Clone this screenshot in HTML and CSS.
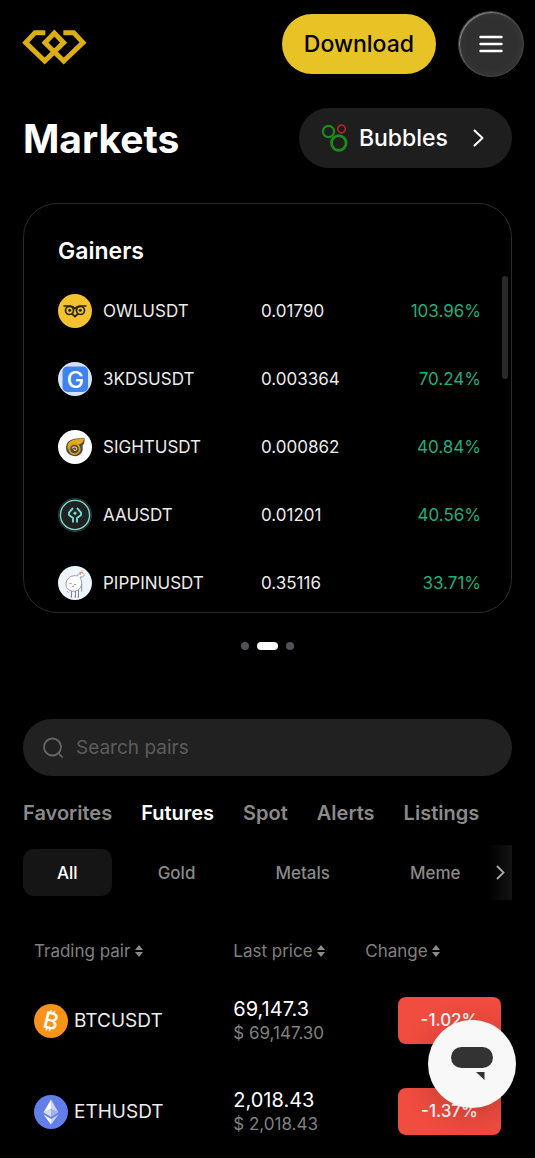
FILE: index.html
```html
<!DOCTYPE html>
<html lang="en">
<head>
  <meta charset="UTF-8">
  <meta name="viewport" content="width=device-width, initial-scale=1.0">
  <title>Markets</title>
  <link rel="stylesheet" href="styles.css">
</head>
<body>

  <!-- Top bar -->
  <header class="topbar">
    <a class="logo" href="#" aria-label="Home">
      <svg width="65" height="36" viewBox="66 86 195 108" fill="none" stroke="#dcae15" stroke-width="15">
        <path d="M136 97H105L77 127L134 182L191 127L163 98L135 127L191 182L249 127L221 97H190"/>
      </svg>
    </a>
    <a class="download" href="#">Download</a>
    <button class="menu" type="button" aria-label="Menu">
      <svg width="24" height="18" viewBox="0 0 24 18" stroke="#fff" stroke-width="2.4" stroke-linecap="round">
        <path d="M1.5 2H22.5M1.5 9H22.5M1.5 16H22.5"/>
      </svg>
    </button>
  </header>

  <main>
    <div class="title-row">
      <h1>Markets</h1>
      <a class="bubbles" href="#">
        <svg width="28" height="28" viewBox="0 0 28 28" fill="none">
          <circle cx="7.5" cy="7.5" r="5.6" stroke="#1d8a1d" stroke-width="2.2"/>
          <circle cx="20.5" cy="5" r="3.8" stroke="#a52a24" stroke-width="1.7"/>
          <circle cx="17.8" cy="19" r="7.3" stroke="#1d8a1d" stroke-width="2.8"/>
        </svg>
        <span>Bubbles</span>
        <svg class="chevron" width="11" height="18" viewBox="0 0 11 18" fill="none" stroke="#fff" stroke-width="2" stroke-linecap="round" stroke-linejoin="round">
          <path d="M1.5 1.5L9.5 9L1.5 16.5"/>
        </svg>
      </a>
    </div>

    <!-- Gainers card -->
    <section class="card">
      <h2>Gainers</h2>
      <ul class="coins">
        <li>
          <span class="coin">
            <svg width="34" height="34" viewBox="0 0 34 34" fill="none">
              <circle cx="17" cy="17" r="17" fill="#f2c230"/>
              <g stroke="#292410" stroke-width="1.7">
                <path d="M5.5 12H12.5C15 12 16 13.3 17 14.6C18 13.3 19 12 21.5 12H28.5"/>
                <circle cx="11.5" cy="16.5" r="4"/>
                <circle cx="22.5" cy="16.5" r="4"/>
                <path d="M14.2 20L17 22.5L19.8 20"/>
              </g>
              <circle cx="11.7" cy="16.3" r="1.5" fill="#292410"/>
              <circle cx="22.3" cy="16.3" r="1.5" fill="#292410"/>
            </svg>
            OWLUSDT
          </span>
          <span>0.01790</span>
          <span class="up">103.96%</span>
        </li>
        <li>
          <span class="coin">
            <svg width="34" height="34" viewBox="0 0 34 34">
              <circle cx="17" cy="17" r="17" fill="#d5e2fa"/>
              <rect x="4.5" y="4.5" width="25.5" height="25.5" rx="5" fill="#3f83f3"/>
              <text class="letter" x="17.3" y="25.5" text-anchor="middle" fill="#fff">G</text>
            </svg>
            3KDSUSDT
          </span>
          <span>0.003364</span>
          <span class="up">70.24%</span>
        </li>
        <li>
          <span class="coin">
            <svg width="34" height="34" viewBox="0 0 34 34" fill="none">
              <circle cx="17" cy="17" r="17" fill="#fff"/>
              <path d="M26.5 7.5C24 9 15 7 10 12C6 17 8 25 15.5 26C22 27 26 22 24.5 15.5C27 13.5 26.5 10 26.5 7.5Z" fill="#4d4a45"/>
              <path d="M26 8.2C22 9.5 15 8 11 12.5C9 15 9 18 10 20C11 14 17 13 20 14.5C23 14.5 26 12 26 8.2Z" fill="#e5ab1e"/>
              <circle cx="16.5" cy="19" r="5.2" stroke="#d69d20" stroke-width="1.8"/>
              <path d="M14 18.5C15 16 20 17 18.5 19.5C17.5 21 15.5 20.5 16 19" stroke="#edbd3d" stroke-width="1.3"/>
            </svg>
            SIGHTUSDT
          </span>
          <span>0.000862</span>
          <span class="up">40.84%</span>
        </li>
        <li>
          <span class="coin">
            <svg width="34" height="34" viewBox="0 0 34 34" fill="none" stroke="#78d9cf">
              <circle cx="17" cy="17" r="16.5" fill="#202221" stroke="#363b3a" stroke-width="1"/>
              <circle cx="17" cy="17" r="14.6" stroke-width="1.4"/>
              <path d="M15 10L11 14.5V17L15 20V24.5M19 10L23 14.5V17L19 20V24.5" stroke-width="1.9"/>
              <path d="M17 13.3L19 15.3L17 17.3L15 15.3Z" fill="#78d9cf" stroke="none"/>
            </svg>
            AAUSDT
          </span>
          <span>0.01201</span>
          <span class="up">40.56%</span>
        </li>
        <li>
          <span class="coin">
            <svg width="34" height="34" viewBox="0 0 34 34" fill="none">
              <circle cx="17" cy="17" r="17" fill="#eff5fd"/>
              <g stroke="#85868c" stroke-width=".8">
                <path d="M13.5 24.5V31M17.5 25V31M20.5 24V31M23.7 18V25.5M12.5 31H14M16.5 31H18M19.5 31H21" stroke="#686a74"/>
                <path d="M22 11C24 15 25 21 20 24C15 27 8 24.5 8 18.5C8 12 14 8.5 19.5 10C20 7.5 22 6 24.5 7C27.5 8.5 26 11.5 23 11Z" fill="#fdfdfd"/>
                <path d="M11.5 17.5H13.5M16 18.5H18M14 20Q15 21 16 20"/>
              </g>
              <path d="M24 3L23.3 7H24.8Z" fill="#dda13a"/>
              <path d="M22.5 6L22 9M9 25L10.5 27" stroke="#ee7780"/>
            </svg>
            PIPPINUSDT
          </span>
          <span>0.35116</span>
          <span class="up">33.71%</span>
        </li>
      </ul>
      <span class="scroll-thumb"></span>
    </section>

    <div class="dots">
      <button type="button" aria-label="Slide 1"></button>
      <button class="active" type="button" aria-label="Slide 2"></button>
      <button type="button" aria-label="Slide 3"></button>
    </div>

    <label class="search">
      <svg width="22" height="22" viewBox="0 0 22 22" fill="none" stroke="#666" stroke-width="1.8" stroke-linecap="round">
        <circle cx="9.5" cy="10" r="8.5"/>
        <path d="M15.5 16L19 20"/>
      </svg>
      <input type="text" placeholder="Search pairs" aria-label="Search pairs">
    </label>

    <nav class="tabs">
      <a href="#">Favorites</a>
      <a class="active" href="#">Futures</a>
      <a href="#">Spot</a>
      <a href="#">Alerts</a>
      <a href="#">Listings</a>
    </nav>

    <div class="filters">
      <div class="chips">
        <button class="active" type="button">All</button>
        <button type="button">Gold</button>
        <button type="button">Metals</button>
        <button type="button">Meme</button>
      </div>
      <button class="more" type="button" aria-label="More categories">
        <svg width="9" height="15" viewBox="0 0 9 15" fill="none" stroke="#aaa" stroke-width="1.8">
          <path d="M1 1L7.5 7.5L1 14"/>
        </svg>
      </button>
    </div>

    <!-- Pairs -->
    <table class="pairs">
      <thead>
        <tr>
          <th>Trading pair <svg class="sort" width="8" height="12" viewBox="0 0 8 12" fill="#8c8c8c"><path d="M4 0L8 5H0ZM0 7H8L4 12Z"/></svg></th>
          <th>Last price <svg class="sort" width="8" height="12" viewBox="0 0 8 12" fill="#8c8c8c"><path d="M4 0L8 5H0ZM0 7H8L4 12Z"/></svg></th>
          <th>Change <svg class="sort" width="8" height="12" viewBox="0 0 8 12" fill="#8c8c8c"><path d="M4 0L8 5H0ZM0 7H8L4 12Z"/></svg></th>
        </tr>
      </thead>
      <tbody>
        <tr>
          <td>
            <div class="pair">
              <svg width="34" height="34" viewBox="0 0 34 34">
                <circle cx="17" cy="17" r="17" fill="#f7931a"/>
                <text class="letter" x="17" y="25" text-anchor="middle" fill="#fff" transform="rotate(14 17 17)">₿</text>
              </svg>
              BTCUSDT
            </div>
          </td>
          <td><div class="price">69,147.3</div><div class="usd">$ 69,147.30</div></td>
          <td><div class="change">-1.02%</div></td>
        </tr>
        <tr>
          <td>
            <div class="pair">
              <svg width="34" height="34" viewBox="0 0 34 34">
                <circle cx="17" cy="17" r="17" fill="#627eea"/>
                <path d="M17 4.5L9.5 17.5L17 14Z" fill="#fff"/>
                <path d="M17 4.5L24.5 17.5L17 14Z" fill="#cdd6f8"/>
                <path d="M9.5 17.5L17 14V22Z" fill="#d5dcf9"/>
                <path d="M24.5 17.5L17 14V22Z" fill="#a3b3f2"/>
                <path d="M9.5 19.5L17 24V29.5Z" fill="#fff"/>
                <path d="M24.5 19.5L17 24V29.5Z" fill="#cdd6f8"/>
              </svg>
              ETHUSDT
            </div>
          </td>
          <td><div class="price">2,018.43</div><div class="usd">$ 2,018.43</div></td>
          <td><div class="change">-1.37%</div></td>
        </tr>
      </tbody>
    </table>
  </main>

  <!-- Floating chat button -->
  <button class="chat" type="button" aria-label="Chat">
    <svg width="42" height="34" viewBox="0 0 42 34" fill="#333">
      <rect width="42" height="21" rx="10.5"/>
      <path d="M25 25H33.5V33Z"/>
    </svg>
  </button>

</body>
</html>
```
FILE: styles.css
```css
* {
  box-sizing: border-box;
}

body {
  margin: 0;
  background-color: #000;
  color: #fff;
  font-family: Inter, "Open Sans", sans-serif;
  font-size: 17px;
}

a {
  color: inherit;
  text-decoration: none;
}

button {
  border: 0;
  padding: 0;
  font: inherit;
  color: inherit;
  background: none;
}

svg {
  display: block;
  flex-shrink: 0;
}

/* Top bar */
.topbar {
  display: flex;
  align-items: center;
  gap: 22px;
  padding: 11px 11px 0 22px;
}

.logo {
  margin-right: auto;
  padding-top: 6px;
}

.download {
  display: flex;
  align-items: center;
  height: 60px;
  padding: 0 22px;
  border-radius: 30px;
  background-color: #e8c325;
  color: #000;
  font-size: 23px;
  font-weight: 500;
}

.menu {
  display: flex;
  align-items: center;
  justify-content: center;
  width: 66px;
  height: 66px;
  border-radius: 50%;
  border: 1px solid #484848;
  background: radial-gradient(circle, #303030 55%, #3c3c3c 100%);
  box-shadow: inset 1px 1px 1px #888;
}

main {
  padding: 31px 23px 0;
}

.title-row {
  display: flex;
  align-items: center;
  justify-content: space-between;
}

h1 {
  margin: 0;
  font-size: 39px;
  font-weight: 700;
}

.bubbles {
  display: flex;
  align-items: center;
  gap: 10px;
  height: 60px;
  padding: 0 28px 0 22px;
  border-radius: 30px;
  background-color: #1e1e1e;
  font-size: 23px;
  font-weight: 500;
}

.chevron {
  margin-left: 15px;
}

/* Gainers card */
.card {
  position: relative;
  margin-top: 35px;
  padding: 32px 30px 12px 34px;
  border: 1px solid #2a2a2c;
  border-radius: 34px;
}

h2 {
  margin: 0;
  font-size: 23px;
  font-weight: 600;
  line-height: 30px;
}

.coins {
  display: flex;
  flex-direction: column;
  gap: 34px;
  margin: 0;
  padding: 28px 0 0;
  list-style: none;
}

.coins li {
  display: grid;
  grid-template-columns: 48% 1fr auto;
  align-items: center;
  color: #ececec;
}

.coin {
  display: flex;
  align-items: center;
  gap: 11px;
}

.letter {
  font-family: Inter, "DejaVu Sans", sans-serif;
  font-size: 23px;
  font-weight: 500;
}

.coins .up {
  color: #1fae7c;
}

.scroll-thumb {
  position: absolute;
  top: 72px;
  right: 3px;
  width: 6px;
  height: 103px;
  border-radius: 3px;
  background-color: #292929;
}

/* Slider dots */
.dots {
  display: flex;
  justify-content: center;
  gap: 8px;
  margin-top: 29px;
}

.dots button {
  width: 8px;
  height: 8px;
  border-radius: 4px;
  background-color: #4d5358;
}

.dots .active {
  width: 21px;
  background-color: #fff;
}

/* Search */
.search {
  display: flex;
  align-items: center;
  gap: 11px;
  height: 57px;
  margin-top: 69px;
  padding: 0 20px;
  border-radius: 29px;
  background-color: #212121;
}

.search input {
  flex: 1;
  min-width: 0;
  padding: 0;
  border: 0;
  outline: 0;
  background: none;
  color: #fff;
  font: inherit;
  font-size: 19px;
}

.search input::placeholder {
  color: #5c5c5c;
}

/* Tabs and filters */
.tabs {
  display: flex;
  gap: 29px;
  margin-top: 24px;
  color: #8a8a8a;
  font-size: 20px;
  font-weight: 600;
  line-height: 26px;
}

.tabs .active {
  color: #fff;
}

.filters {
  position: relative;
  margin-top: 23px;
}

.chips {
  display: flex;
  gap: 12px;
  overflow: hidden;
}

.chips button {
  flex-shrink: 0;
  height: 47px;
  padding: 0 34px;
  border-radius: 11px;
  color: #8a8a8a;
  font-weight: 500;
}

.chips .active {
  background-color: #151515;
  color: #fff;
}

.more {
  position: absolute;
  top: -4px;
  right: 0;
  display: flex;
  align-items: center;
  justify-content: center;
  width: 24px;
  height: 55px;
  background: linear-gradient(to right, transparent, #131313);
}

/* Pairs */
.pairs {
  width: 100%;
  margin-top: 41px;
  border-collapse: collapse;
  table-layout: fixed;
}

.pairs th {
  padding: 0 0 9px;
  color: #808080;
  font-weight: 400;
  line-height: 29px;
  text-align: left;
}

.pairs th:first-child,
.pairs td:first-child {
  width: 43%;
  padding-left: 11px;
}

.pairs th:nth-child(2) {
  width: 27%;
}

.sort {
  display: inline-block;
}

.pairs td {
  height: 91px;
  padding: 0;
}

.pairs tr > :last-child {
  padding-right: 11px;
}

.pair {
  display: flex;
  align-items: center;
  gap: 6px;
  font-size: 19px;
  color: #ececec;
}

.price {
  font-size: 20px;
  line-height: 24px;
}

.usd {
  color: #808080;
  line-height: 24px;
}

.change {
  width: 103px;
  margin-left: auto;
  border-radius: 8px;
  background-color: #f04c3f;
  font-weight: 500;
  line-height: 47px;
  text-align: center;
}

.chat {
  position: fixed;
  right: 19px;
  bottom: 50px;
  display: flex;
  align-items: center;
  justify-content: center;
  width: 88px;
  height: 88px;
  border-radius: 50%;
  background-color: #f8f8f8;
  box-shadow: 0 6px 30px rgba(0, 8, 10, 0.2);
}
```
